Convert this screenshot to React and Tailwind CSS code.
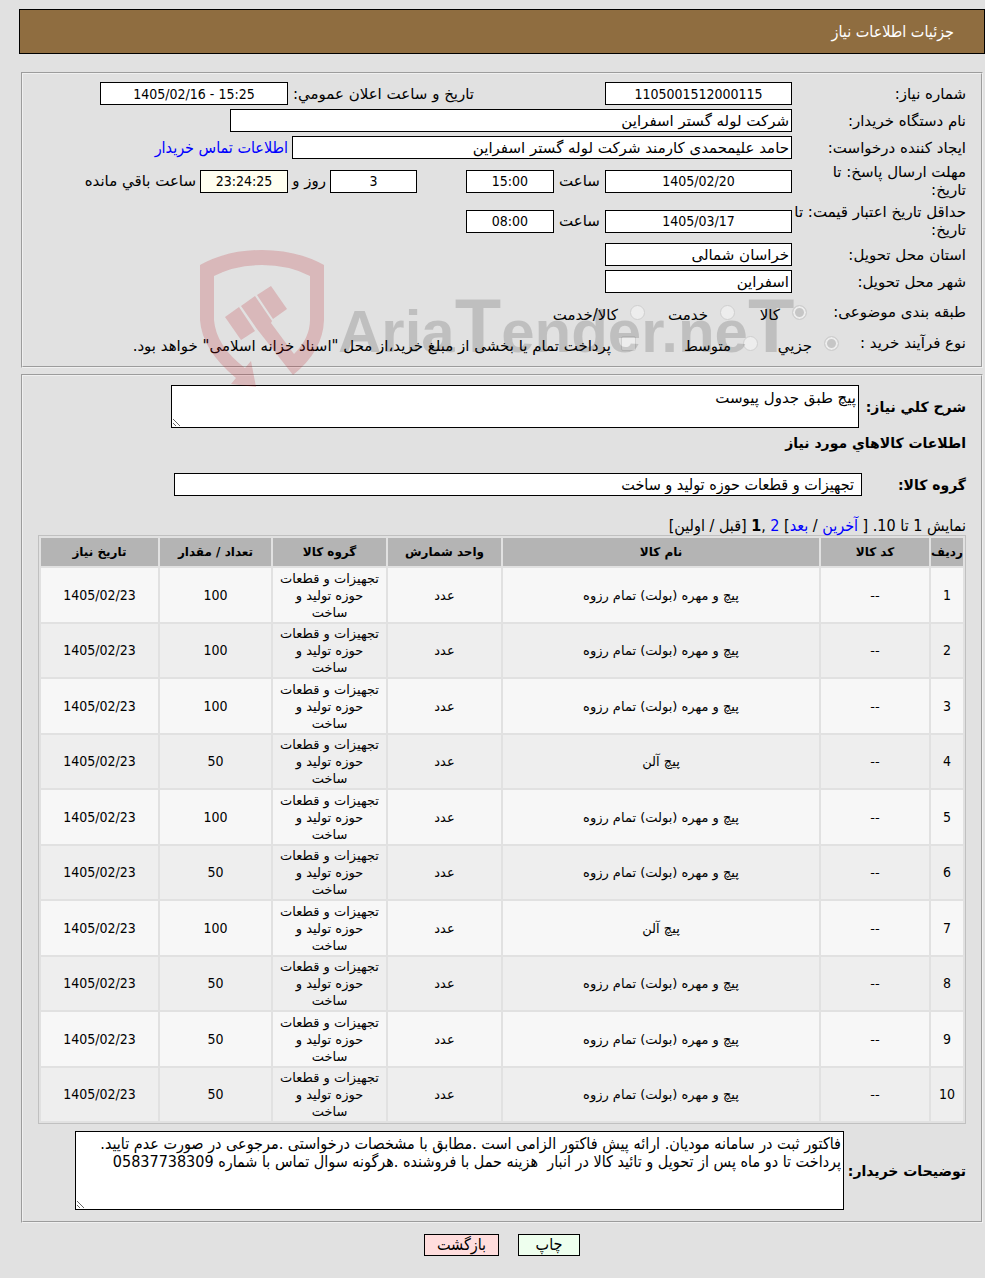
const items = [
  { id: 1, name: 'پیچ و مهره (بولت) تمام رزوه', count: 100 },
  { id: 2, name: 'پیچ و مهره (بولت) تمام رزوه', count: 100 },
  { id: 3, name: 'پیچ و مهره (بولت) تمام رزوه', count: 100 },
  { id: 4, name: 'پیچ آلن', count: 50 },
  { id: 5, name: 'پیچ و مهره (بولت) تمام رزوه', count: 100 },
  { id: 6, name: 'پیچ و مهره (بولت) تمام رزوه', count: 50 },
  { id: 7, name: 'پیچ آلن', count: 100 },
  { id: 8, name: 'پیچ و مهره (بولت) تمام رزوه', count: 50 },
  { id: 9, name: 'پیچ و مهره (بولت) تمام رزوه', count: 50 },
  { id: 10, name: 'پیچ و مهره (بولت) تمام رزوه', count: 50 },
];

const columns = [
  { title: 'ردیف', width: 'w-[32px]' },
  { title: 'کد کالا', width: 'w-[108px]' },
  { title: 'نام کالا', width: '' },
  { title: 'واحد شمارش', width: 'w-[113px]' },
  { title: 'گروه کالا', width: 'w-[113px]' },
  { title: 'تعداد / مقدار', width: 'w-[111px]' },
  { title: 'تاریخ نیاز', width: 'w-[117px]' },
];

const condensed = "[font-family:'DejaVu_Sans_Condensed','DejaVu_Sans',sans-serif]";
const wide = "[font-family:'DejaVu_Sans',sans-serif]";
const digits = `text-[14px] ${condensed}`;
const title = `shrink-0 text-[14px] font-bold ${wide}`;

const box = 'h-[23px] border border-black bg-white px-[2px] shrink-0';
const numberBox = `h-[23px] border border-black px-[2px] shrink-0 text-center ${digits}`;
const radio = 'size-[15px] shrink-0 appearance-none rounded-full border border-[#cfcfcf] bg-[#f0f0f0]/80';
const panel = 'relative mr-[2px] ml-[21px] border-2 [border-style:groove] border-[#f0f0f0]';

function Row({ label, id, children }) {
  return (
    <div className="flex min-h-[23px] items-center">
      <label htmlFor={id} className="w-[174px] shrink-0 whitespace-nowrap">{label}</label>
      {children}
    </div>
  );
}

function Watermark() {
  return (
    <svg
      className="pointer-events-none absolute left-[177px] top-[176px] z-10 h-[138px] w-[610px]"
      viewBox="200 250 610 138"
      direction="ltr"
      aria-hidden="true"
    >
      <g fill="#b9141e" fillOpacity="0.2">
        <path d="M200 265Q227 250 262 250Q297 250 324 265V320Q323 351 293 375L257 329L241 306L255 296L272 321L271 323L294 354Q310 338 310 320V276Q289 265 262 265Q235 265 214 276V320Q216 346 245 368L251 361L256 387L231 384L236 378Q202 350 200 320Z" />
        <path d="M225 317L239 307L255 331L241 340Z" />
        <path d="M257 295L271 286L287 309L273 319Z" />
      </g>
      <text
        x="338"
        y="352"
        className="text-[60px] font-bold [font-family:'Liberation_Sans',sans-serif]"
        fill="#000"
        fillOpacity="0.15"
      >
        Aria<tspan className="text-[76px]">T</tspan>ender.ne<tspan className="text-[76px]">T</tspan>
      </text>
    </svg>
  );
}

export default function App() {
  return (
    <div
      dir="rtl"
      className={`min-h-screen bg-[#e1e1e1] pt-[9px] pb-[22px] text-[16px] leading-[18px] text-black ${condensed}`}
    >
      <header className="ml-[19px] flex h-[45px] items-center border border-black bg-[#8f6d40] px-[30px] text-white">
        <h1>جزئیات اطلاعات نیاز</h1>
      </header>

      {/* مشخصات نیاز */}
      <section className={`${panel} ${wide} mt-[18px] pt-2 pr-[15px] pb-[11px] text-[15px]`}>
        <Watermark />
        <div className="flex flex-col gap-1">
          <Row label="شماره نیاز:" id="number">
            <input id="number" readOnly defaultValue="1105001512000115" className={`${numberBox} w-[187px] bg-white`} />
            <label htmlFor="announce" className="mr-[131px] w-[186px] shrink-0 whitespace-nowrap">تاریخ و ساعت اعلان عمومي:</label>
            <input id="announce" readOnly defaultValue="1405/02/16 - 15:25" dir="ltr" className={`${numberBox} w-[188px] bg-white`} />
          </Row>
          <Row label="نام دستگاه خریدار:" id="buyer">
            <input id="buyer" readOnly defaultValue="شرکت لوله گستر اسفراین" className={`${box} w-[562px]`} />
          </Row>
          <Row label="ایجاد کننده درخواست:" id="creator">
            <input id="creator" readOnly defaultValue="حامد علیمحمدی کارمند شرکت لوله گستر اسفراین" className={`${box} w-[500px]`} />
            <a href="#contact" className={`mr-1 text-[16px] text-[#0000ff] ${condensed}`}>اطلاعات تماس خریدار</a>
          </Row>
          <Row label={<>مهلت ارسال پاسخ: تا<br />تاریخ:</>} id="deadline">
            <input id="deadline" readOnly defaultValue="1405/02/20" className={`${numberBox} w-[187px] bg-white`} />
            <label htmlFor="deadlineHour" className="w-[51px] shrink-0 text-center">ساعت</label>
            <input id="deadlineHour" readOnly defaultValue="15:00" className={`${numberBox} w-[88px] bg-white`} />
            <input id="days" readOnly defaultValue="3" className={`${numberBox} mr-[49px] w-[87px] bg-white`} />
            <label htmlFor="days" className="w-[42px] shrink-0 pr-1 whitespace-nowrap">روز و</label>
            <input id="left" readOnly defaultValue="23:24:25" className={`${numberBox} w-[88px] bg-[#fffff0]`} />
            <label htmlFor="left" className="mr-1 whitespace-nowrap">ساعت باقي مانده</label>
          </Row>
          <Row label={<>حداقل تاریخ اعتبار قیمت: تا<br />تاریخ:</>} id="validity">
            <input id="validity" readOnly defaultValue="1405/03/17" className={`${numberBox} w-[187px] bg-white`} />
            <label htmlFor="validityHour" className="w-[51px] shrink-0 text-center">ساعت</label>
            <input id="validityHour" readOnly defaultValue="08:00" className={`${numberBox} w-[88px] bg-white`} />
          </Row>
          <Row label="استان محل تحویل:" id="province">
            <input id="province" readOnly defaultValue="خراسان شمالی" className={`${box} w-[187px]`} />
          </Row>
          <Row label="شهر محل تحویل:" id="city">
            <input id="city" readOnly defaultValue="اسفراین" className={`${box} w-[187px]`} />
          </Row>
        </div>

        <div className="mt-[7px] flex h-[24px] items-center">
          <span className="w-[159px] shrink-0">طبقه بندی موضوعی:</span>
          <input id="goods" type="radio" name="category" disabled defaultChecked className={`${radio} checked:bg-[#c6c6c6] checked:shadow-[inset_0_0_0_2px_#ededed]`} />
          <label htmlFor="goods" className="mr-3 w-[45px] pt-[5px]">کالا</label>
          <input id="service" type="radio" name="category" disabled className={radio} />
          <label htmlFor="service" className="mr-3 w-[63px] pt-[5px]">خدمت</label>
          <input id="both" type="radio" name="category" disabled className={radio} />
          <label htmlFor="both" className="mr-3 pt-[5px]">کالا/خدمت</label>
        </div>
        <div className="mt-[7px] flex h-[24px] items-center">
          <span className="w-[127px] shrink-0">نوع فرآیند خرید :</span>
          <input id="small" type="radio" name="process" disabled defaultChecked className={`${radio} checked:bg-[#c6c6c6] checked:shadow-[inset_0_0_0_2px_#ededed]`} />
          <label htmlFor="small" className="mr-3 w-[54px] pt-[5px]">جزيي</label>
          <input id="medium" type="radio" name="process" disabled className={radio} />
          <label htmlFor="medium" className="mr-3 w-[95px] pt-[5px]">متوسط</label>
          <input id="treasury" type="checkbox" disabled className="size-[15px] shrink-0 appearance-none rounded-[2px] border border-[#cfcfcf] bg-[#f0f0f0]/80" />
          <label htmlFor="treasury" className="mr-[10px] pt-[5px] whitespace-nowrap">
            پرداخت تمام یا بخشی از مبلغ خرید،از محل "اسناد خزانه اسلامی" خواهد بود.
          </label>
        </div>
      </section>

      {/* اقلام */}
      <section className={`${panel} mt-[6px] pt-[9px] pr-[15px] pb-[11px] pl-[15px]`}>
        <div className="flex items-center">
          <label htmlFor="summary" className={`${title} w-[107px]`}>شرح کلي نیاز:</label>
          <textarea id="summary" readOnly defaultValue="پیچ طبق جدول پیوست" className={`${wide} block h-[43px] w-[688px] border border-black bg-white px-[2px] py-[3px] text-[15px]`} />
        </div>
        <h2 className={`${title} mt-[6px]`}>اطلاعات کالاهاي مورد نیاز</h2>
        <div className="mt-[21px] flex items-center">
          <label htmlFor="group" className={`${title} w-[104px]`}>گروه کالا:</label>
          <input id="group" readOnly defaultValue="تجهیزات و قطعات حوزه تولید و ساخت" className="h-[23px] w-[688px] border border-black bg-white px-[7px]" />
        </div>

        <nav className="mt-[21px] whitespace-pre">
          نمایش 1 تا 10. [ <a href="#last" className="text-[#0000ff]">آخرین</a> / <a href="#next" className="text-[#0000ff]">بعد</a>] <a href="#2" className="text-[#0000ff]">2</a> ,<b>1</b> [قبل / اولین]
        </nav>

        <table className={`${wide} w-full table-fixed border-separate border-spacing-[2px] border border-[#c0c0c0] text-center text-[13px] leading-[17px]`}>
          <thead>
            <tr className="h-[28px] bg-[#b4b4b4]">
              {columns.map((c) => (
                <th key={c.title} className={`${c.width} p-0 text-[12px] font-bold whitespace-nowrap`}>{c.title}</th>
              ))}
            </tr>
          </thead>
          <tbody>
            {items.map((item) => (
              <tr key={item.id} className="odd:h-[54px] odd:bg-[#f7f7f7] even:h-[53px] even:bg-[#eeeeee]">
                <td className={digits}>{item.id}</td>
                <td>--</td>
                <td>{item.name}</td>
                <td>عدد</td>
                <td className="p-px">تجهیزات و قطعات<br />حوزه تولید و<br />ساخت</td>
                <td className={digits}>{item.count}</td>
                <td className={digits}>1405/02/23</td>
              </tr>
            ))}
          </tbody>
        </table>

        <div className="mt-[7px] flex items-center">
          <label htmlFor="notes" className={`${title} w-[122px]`}>توضیحات خریدار:</label>
          <textarea
            id="notes"
            readOnly
            defaultValue={'فاکتور ثبت در سامانه مودیان. ارائه پیش فاکتور الزامی است .مطابق با مشخصات درخواستی .مرجوعی در صورت عدم تایید.\nپرداخت تا دو ماه پس از تحویل و تائید کالا در انبار  هزینه حمل با فروشنده .هرگونه سوال تماس با شماره 05837738309'}
            className="block h-[79px] w-[769px] border border-black bg-white px-[2px] py-[3px]"
          />
        </div>
      </section>

      <div className="mt-[11px] mr-[2px] ml-[21px] flex justify-center gap-[19px]">
        <button className="h-[22px] w-[62px] border border-black bg-[#eeffee]">چاپ</button>
        <button className="h-[22px] w-[75px] border border-black bg-[#ffdddd]">بازگشت</button>
      </div>
    </div>
  );
}
